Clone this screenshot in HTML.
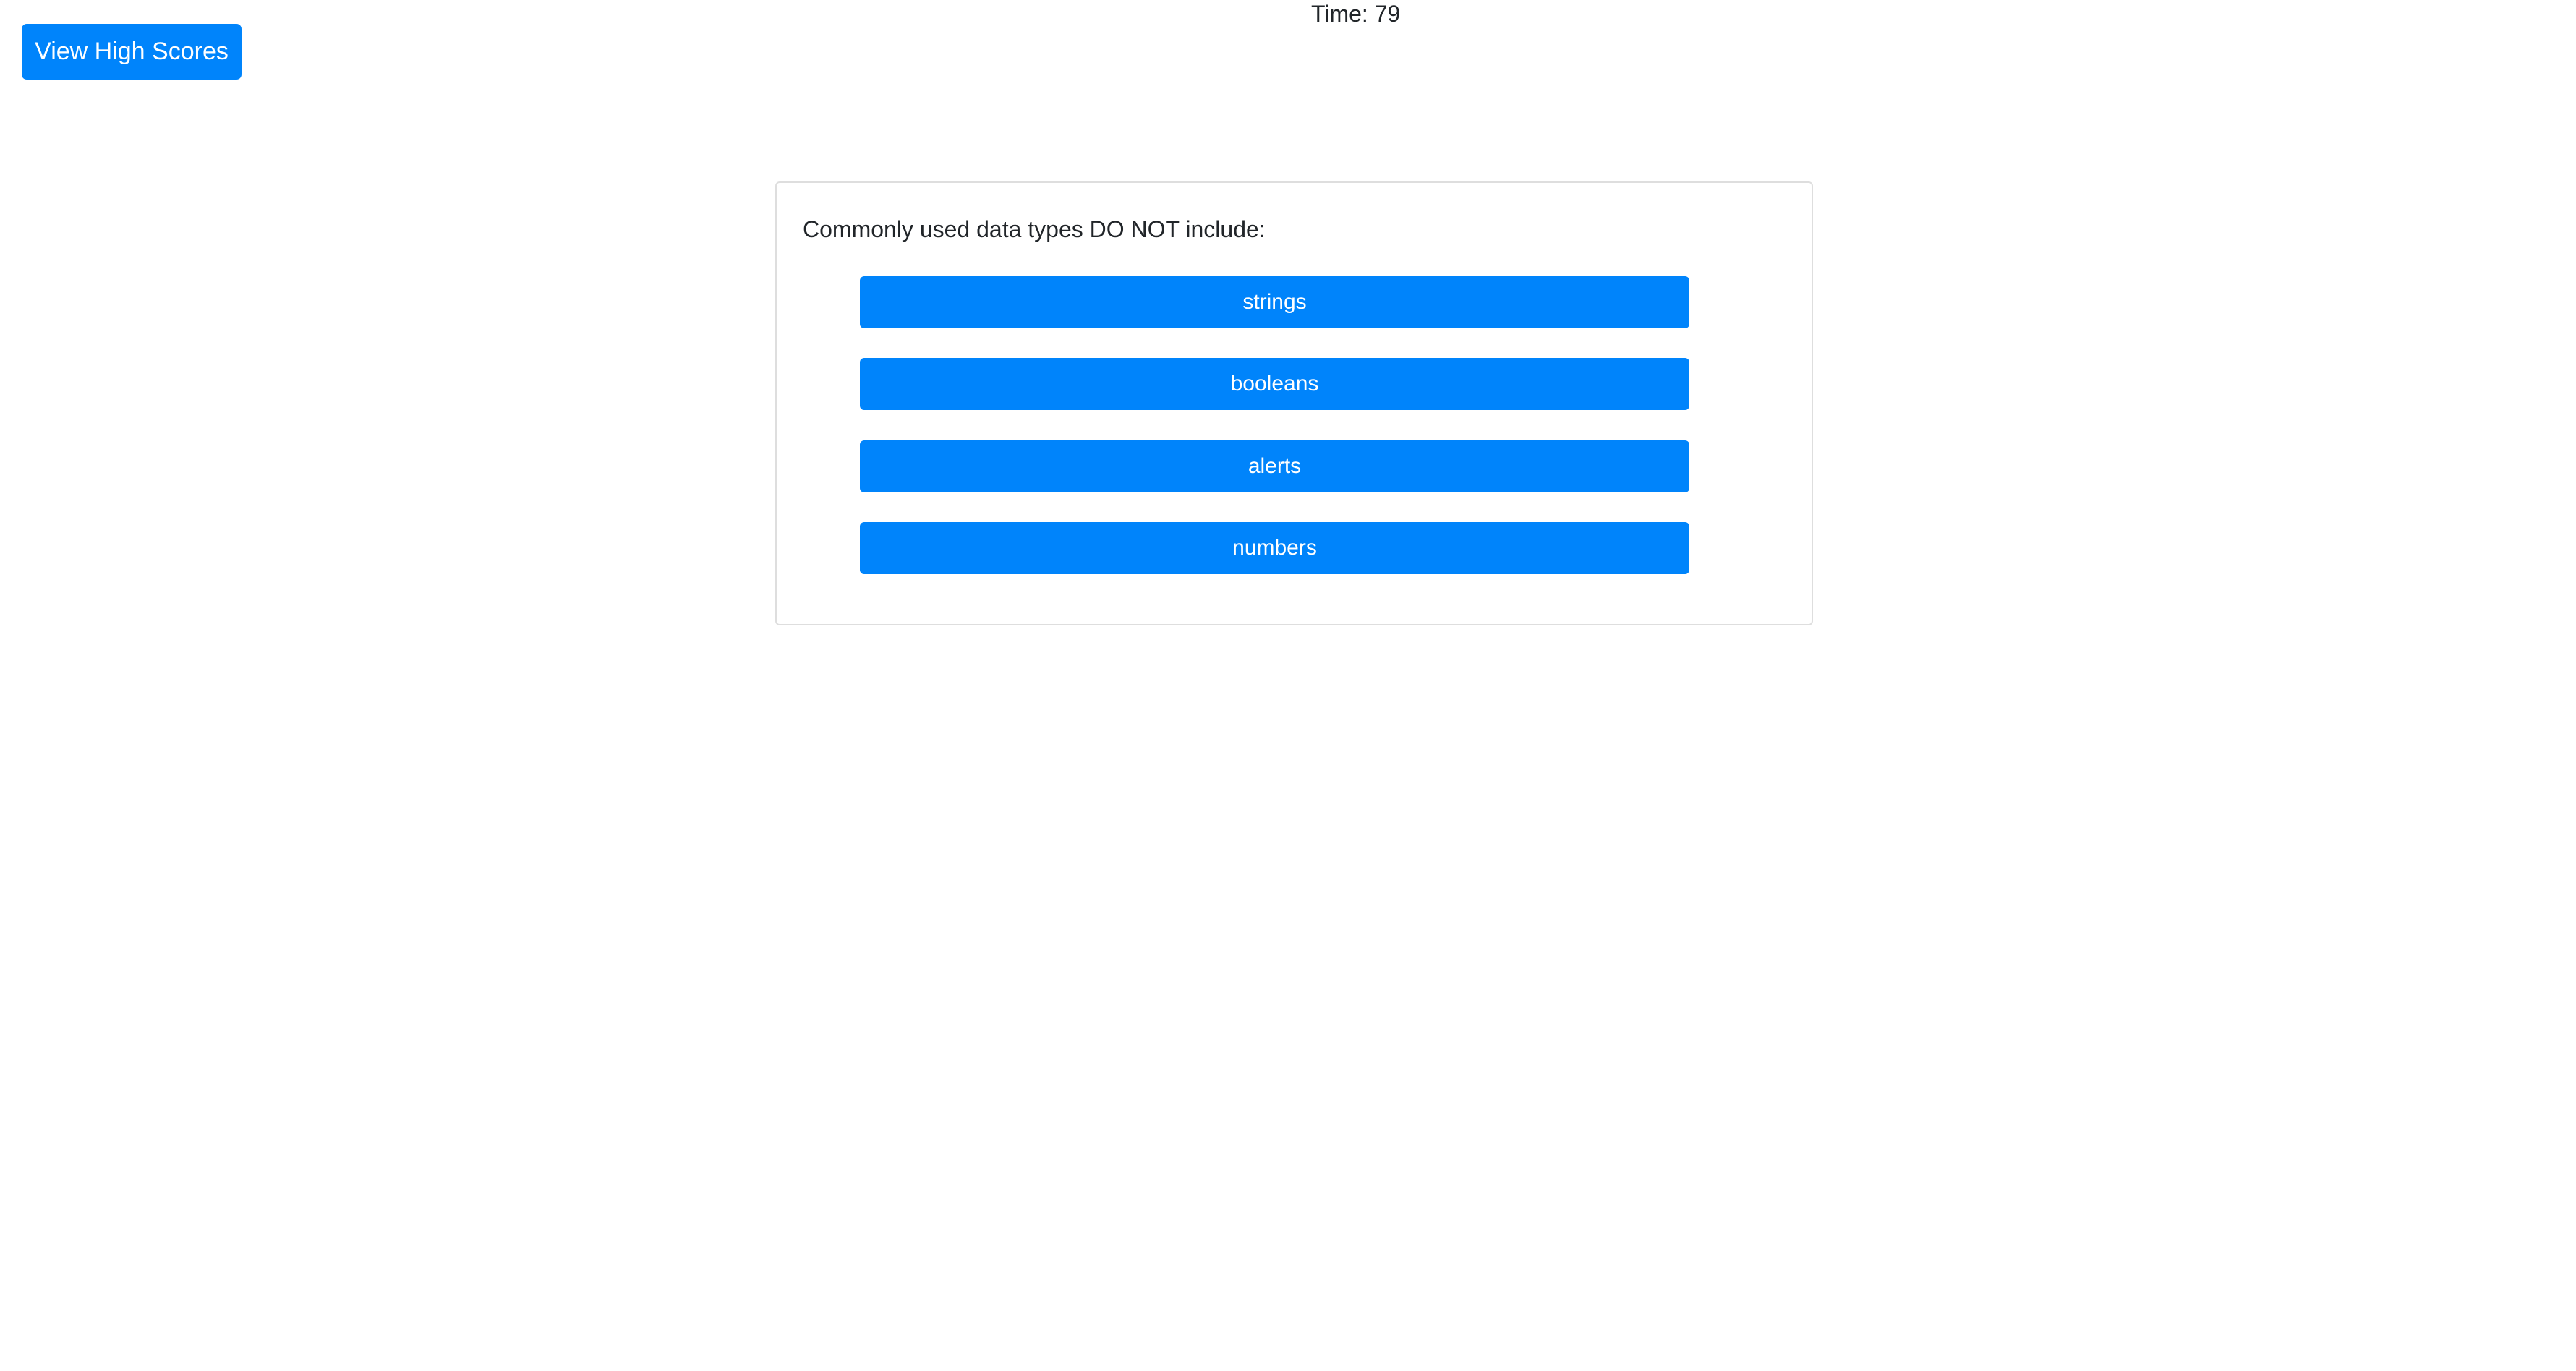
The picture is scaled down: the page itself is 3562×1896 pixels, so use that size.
<!DOCTYPE html>
<html><head><meta charset="utf-8"><style>
html,body{margin:0;padding:0;background:#fff;width:3562px;height:1896px;overflow:hidden;font-family:"Liberation Sans",sans-serif;color:#212529}
.abs{position:absolute}
#time{left:1813px;top:0px;font-size:32px;line-height:38px;white-space:nowrap}
#hs{left:30px;top:33px;width:304px;height:77px;background:#0084fb;border-radius:7px;color:#fff;font-size:34px;line-height:77px;text-align:center}
#card{left:1072px;top:251px;width:1435px;height:614px;border:2px solid #dedede;border-radius:6px;box-sizing:border-box}
#q{left:1110px;top:297px;font-size:32px;line-height:40px;white-space:nowrap}
.b{left:1189px;width:1147px;height:72px;background:#0084fb;border-radius:6px;color:#fff;font-size:30px;line-height:72px;text-align:center}
</style></head><body>
<div class="abs" id="time">Time: 79</div>
<div class="abs" id="hs">View High Scores</div>
<div class="abs" id="card"></div>
<div class="abs" id="q">Commonly used data types DO NOT include:</div>
<div class="abs b" style="top:382px">strings</div>
<div class="abs b" style="top:495px">booleans</div>
<div class="abs b" style="top:609px">alerts</div>
<div class="abs b" style="top:722px">numbers</div>
</body></html>
